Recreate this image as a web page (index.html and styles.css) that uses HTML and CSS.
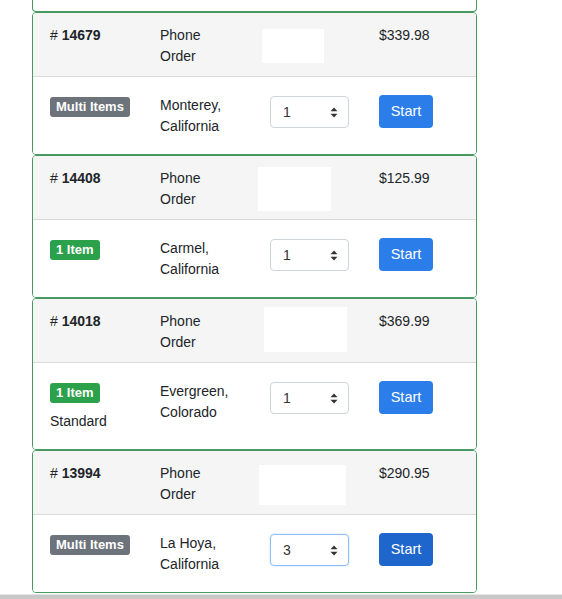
FILE: index.html
```html
<!DOCTYPE html>
<html lang="en">
<head>
<meta charset="utf-8">
<title>Orders</title>
<link rel="stylesheet" href="styles.css">
</head>
<body>
<div class="list">
  <div class="card-stub"></div>

  <div class="card">
    <div class="head">
      <div class="col"># <b>14679</b></div>
      <div class="col">Phone Order</div>
      <div class="col"><div class="thumb" style="width:62px;height:34px;margin-left:-8px;margin-top:4px"></div></div>
      <div class="col">$339.98</div>
    </div>
    <div class="body">
      <div class="col"><span class="badge badge-gray">Multi Items</span></div>
      <div class="col">Monterey, California</div>
      <div class="col">
        <div class="select"><span>1</span><svg width="8" height="11" viewBox="0 0 8 11"><path d="M4 0.5L7.5 4.3H0.5Z M4 10.5L7.5 6.7H0.5Z" fill="#333"/></svg></div>
      </div>
      <div class="col"><button class="btn">Start</button></div>
    </div>
  </div>

  <div class="card">
    <div class="head">
      <div class="col"># <b>14408</b></div>
      <div class="col">Phone Order</div>
      <div class="col"><div class="thumb" style="width:73px;height:44px;margin-left:-12px;margin-top:-1px"></div></div>
      <div class="col">$125.99</div>
    </div>
    <div class="body">
      <div class="col"><span class="badge badge-green">1 Item</span></div>
      <div class="col">Carmel, California</div>
      <div class="col">
        <div class="select"><span>1</span><svg width="8" height="11" viewBox="0 0 8 11"><path d="M4 0.5L7.5 4.3H0.5Z M4 10.5L7.5 6.7H0.5Z" fill="#333"/></svg></div>
      </div>
      <div class="col"><button class="btn">Start</button></div>
    </div>
  </div>

  <div class="card">
    <div class="head">
      <div class="col"># <b>14018</b></div>
      <div class="col">Phone Order</div>
      <div class="col"><div class="thumb" style="width:83px;height:45px;margin-left:-6px;margin-top:-4px"></div></div>
      <div class="col">$369.99</div>
    </div>
    <div class="body">
      <div class="col"><span class="badge badge-green">1 Item</span><div class="note">Standard</div></div>
      <div class="col">Evergreen, Colorado</div>
      <div class="col">
        <div class="select"><span>1</span><svg width="8" height="11" viewBox="0 0 8 11"><path d="M4 0.5L7.5 4.3H0.5Z M4 10.5L7.5 6.7H0.5Z" fill="#333"/></svg></div>
      </div>
      <div class="col"><button class="btn">Start</button></div>
    </div>
  </div>

  <div class="card">
    <div class="head">
      <div class="col"># <b>13994</b></div>
      <div class="col">Phone Order</div>
      <div class="col"><div class="thumb" style="width:87px;height:40px;margin-left:-11px;margin-top:2px"></div></div>
      <div class="col">$290.95</div>
    </div>
    <div class="body">
      <div class="col"><span class="badge badge-gray">Multi Items</span></div>
      <div class="col">La Hoya, California</div>
      <div class="col">
        <div class="select select-focus"><span>3</span><svg width="8" height="11" viewBox="0 0 8 11"><path d="M4 0.5L7.5 4.3H0.5Z M4 10.5L7.5 6.7H0.5Z" fill="#333"/></svg></div>
      </div>
      <div class="col"><button class="btn btn-active">Start</button></div>
    </div>
  </div>
</div>
<div class="bottom-bar"></div>
</body>
</html>
```

FILE: styles.css
```css
html, body {
  margin: 0;
  padding: 0;
  background: #fff;
}

body {
  font-family: "Liberation Sans", Arial, sans-serif;
  font-size: 14px;
  line-height: 21px;
  color: #212529;
  overflow: hidden;
  height: 599px;
  display: flex;
  flex-direction: column;
}

.list {
  margin-left: 32px;
  width: 445px;
  display: flex;
  flex-direction: column;
}

.card-stub {
  height: 11px;
  border: 1px solid #479a5f;
  border-top: none;
  border-radius: 0 0 4px 4px;
}

.card {
  border: 1px solid #479a5f;
  border-radius: 4px;
  overflow: hidden;
}

.head,
.body {
  display: grid;
  grid-template-columns: 80px 80px 79px 1fr;
  column-gap: 30px;
  padding-left: 17px;
  padding-right: 17px;
  align-items: start;
}

.head {
  height: 51px;
  padding-top: 12px;
  background: #f5f5f5;
  border-bottom: 1px solid #dadada;
}

.body {
  padding-top: 18px;
  padding-bottom: 17px;
  background: #fff;
}

.col b {
  font-weight: 700;
}

.thumb {
  background: #fff;
}

.badge {
  display: inline-block;
  margin-top: 2px;
  padding: 3px 6px;
  font-size: 13px;
  line-height: 14px;
  font-weight: 700;
  color: #fff;
  border-radius: 3px;
  white-space: nowrap;
  vertical-align: top;
}

.badge-gray {
  background: #6c737a;
}

.badge-green {
  background: #2ca14c;
}

.note {
  margin-top: 8px;
}

.select {
  box-sizing: border-box;
  width: 79px;
  height: 32px;
  margin-top: 1px;
  padding: 0 10px 0 12px;
  display: flex;
  align-items: center;
  justify-content: space-between;
  border: 1px solid #cfd4d9;
  border-radius: 4px;
  background: #fff;
  color: #333;
}

.select-focus {
  border-color: #8fc0f5;
  box-shadow: 0 0 0 1px rgba(120, 175, 240, 0.15);
}

.btn {
  box-sizing: border-box;
  width: 54px;
  height: 33px;
  padding: 0;
  border: none;
  border-radius: 4px;
  background: #2b7ee9;
  color: #fff;
  font-family: "Liberation Sans", Arial, sans-serif;
  font-size: 14.5px;
  line-height: 21px;
  cursor: pointer;
}

.btn-active {
  background: #1e66cc;
}

.bottom-bar {
  margin-top: 1px;
  height: 6px;
  background: #c8c8c8;
  border-top: 1px solid #e4e4e4;
}
```
